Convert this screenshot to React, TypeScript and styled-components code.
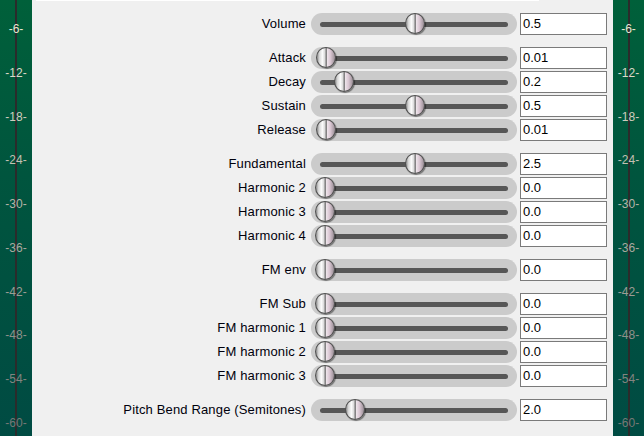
import React from 'react';
import styled, { createGlobalStyle } from 'styled-components';

const Global = createGlobalStyle`
  html, body { margin: 0; padding: 0; background: #f0f0f0; }
  body { font-family: "Liberation Sans", Arial, sans-serif; }
`;

const Page = styled.div`
  display: flex;
  width: 644px;
  height: 436px;
  overflow: hidden;
  background: #f0f0f0;
`;

const Meter = styled.div<{ $w: number; $line: number }>`
  width: ${(p) => p.$w}px;
  flex: none;
  height: 436px;
  box-sizing: border-box;
  padding: 22px 0 6px;
  display: flex;
  flex-direction: column;
  justify-content: space-between;
  align-items: center;
  background:
    linear-gradient(to right, transparent ${(p) => p.$line}px, #2b2b2b ${(p) => p.$line}px, #2b2b2b ${(p) => p.$line + 2}px, transparent ${(p) => p.$line + 2}px),
    linear-gradient(to bottom, #00603a 0%, #00553e 40%, #004b43 100%);
`;

const Tick = styled.div<{ $c: string }>`
  font-size: 12px;
  line-height: 14px;
  height: 14px;
  color: ${(p) => p.$c};
  white-space: nowrap;
`;

const Content = styled.div`
  flex: 1;
  display: flex;
  flex-direction: column;
`;

const TopEdge = styled.div`
  height: 1px;
  width: 503px;
  margin-left: 4px;
  background: #ffffff;
  margin-bottom: 12px;
`;

const Groups = styled.div`
  display: flex;
  flex-direction: column;
  gap: 12px;
`;

const Group = styled.div`
  display: flex;
  flex-direction: column;
  gap: 2px;
`;

const Row = styled.div`
  display: flex;
  align-items: center;
  height: 22px;
`;

const Label = styled.div`
  width: 274px;
  text-align: right;
  font-size: 13px;
  line-height: 22px;
  letter-spacing: 0.15px;
  color: #00000c;
  white-space: nowrap;
`;

const Track = styled.div`
  position: relative;
  width: 206px;
  height: 22px;
  margin-left: 5px;
  border-radius: 11px;
  background: #cbcbcb;
  flex: none;
`;

const Groove = styled.div`
  position: absolute;
  left: 9px;
  right: 9px;
  top: 9px;
  height: 5px;
  border-radius: 3px;
  background: #575757;
`;

const Knob = styled.div`
  position: absolute;
  top: 0px;
  width: 20px;
  height: 21px;
  box-sizing: border-box;
  border-radius: 50%;
  border: 1px solid #505050;
  background: linear-gradient(
    to right,
    #8e8e8e 0%,
    #d8d8d8 14%,
    #fbfbfb 30%,
    #d4d4d4 46%,
    #6a6a6a 49%,
    #6a6a6a 52%,
    #efe6ec 56%,
    #d9c6d2 75%,
    #9a8f96 100%
  );
  box-shadow: 1px 1px 1px rgba(0, 0, 0, 0.45);
`;

const ValueBox = styled.div`
  width: 87px;
  height: 22px;
  margin-left: 3px;
  box-sizing: border-box;
  border: 1px solid #7a7a7a;
  background: #ffffff;
  padding-left: 2px;
  font-size: 13px;
  line-height: 20px;
  color: #000;
  flex: none;
`;

type Param = { label: string; value: string; pos: number };

const groups: Param[][] = [
  [{ label: 'Volume', value: '0.5', pos: 0.5 }],
  [
    { label: 'Attack', value: '0.01', pos: 0.005 },
    { label: 'Decay', value: '0.2', pos: 0.105 },
    { label: 'Sustain', value: '0.5', pos: 0.5 },
    { label: 'Release', value: '0.01', pos: 0.005 },
  ],
  [
    { label: 'Fundamental', value: '2.5', pos: 0.5 },
    { label: 'Harmonic 2', value: '0.0', pos: 0 },
    { label: 'Harmonic 3', value: '0.0', pos: 0 },
    { label: 'Harmonic 4', value: '0.0', pos: 0 },
  ],
  [{ label: 'FM env', value: '0.0', pos: 0 }],
  [
    { label: 'FM Sub', value: '0.0', pos: 0 },
    { label: 'FM harmonic 1', value: '0.0', pos: 0 },
    { label: 'FM harmonic 2', value: '0.0', pos: 0 },
    { label: 'FM harmonic 3', value: '0.0', pos: 0 },
  ],
  [{ label: 'Pitch Bend Range (Semitones)', value: '2.0', pos: 1 / 6 }],
];

const ticks = [-6, -12, -18, -24, -30, -36, -42, -48, -54, -60];

function tone(i: number): string {
  const t = i / (ticks.length - 1);
  const a = [232, 228, 210];
  const b = [118, 120, 118];
  const c = a.map((v, k) => Math.round(v + (b[k] - v) * t));
  return `rgb(${c[0]},${c[1]},${c[2]})`;
}

function Scale({ w, line }: { w: number; line: number }) {
  return (
    <Meter $w={w} $line={line}>
      {ticks.map((t, i) => (
        <Tick key={t} $c={tone(i)}>{`${t}-`}</Tick>
      ))}
    </Meter>
  );
}

export default function App() {
  return (
    <>
      <Global />
      <Page>
        <Scale w={32} line={15} />
        <Content>
          <TopEdge />
          <Groups>
            {groups.map((g, gi) => (
              <Group key={gi}>
                {g.map((p) => (
                  <Row key={p.label}>
                    <Label>{p.label}</Label>
                    <Track>
                      <Groove />
                      <Knob style={{ left: `${4 + p.pos * 180}px` }} />
                    </Track>
                    <ValueBox>{p.value}</ValueBox>
                  </Row>
                ))}
              </Group>
            ))}
          </Groups>
        </Content>
        <Scale w={31} line={15} />
      </Page>
    </>
  );
}
